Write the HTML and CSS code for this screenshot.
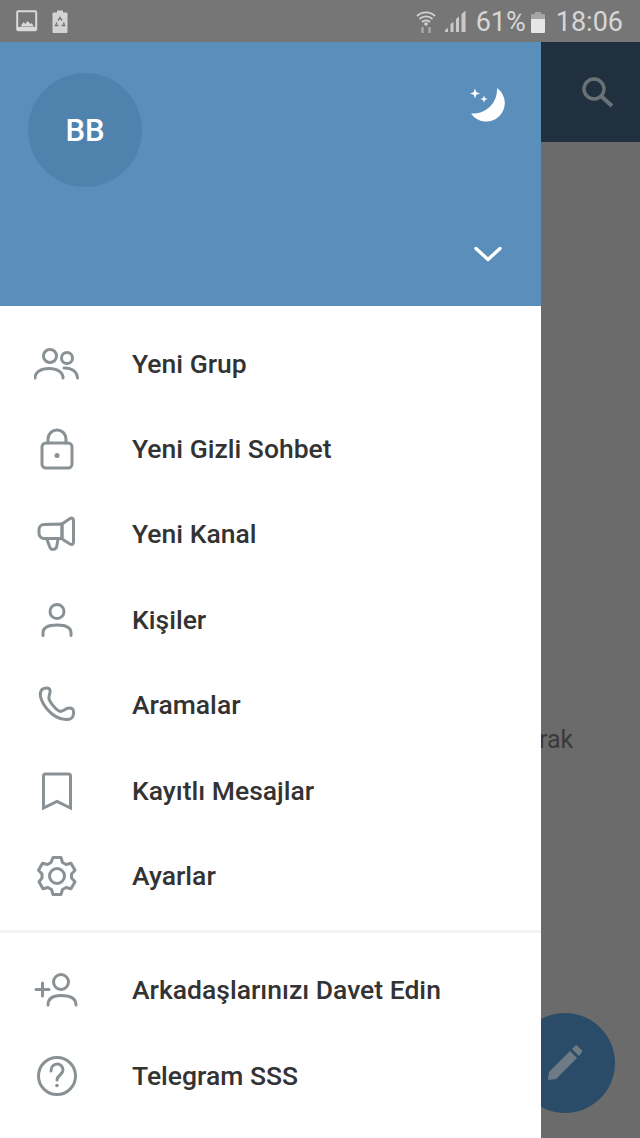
FILE: index.html
```html
<!DOCTYPE html>
<html lang="tr">
  <head>
    <meta charset="UTF-8" />
    <meta name="viewport" content="width=device-width, initial-scale=1.0" />
    <title>Telegram Menu</title>
    <link rel="stylesheet" href="styles.css">
  </head>
  <body>
    <div class="phone">
      <!-- Status bar -->
      <div class="statusbar">
        <div class="status-left">
          <svg class="st-icon" width="22" height="22" viewBox="0 0 22 22">
            <rect x="1.2" y="1.2" width="19" height="19" rx="1" fill="none" stroke="#d9d9d9" stroke-width="2"/>
            <path d="M4.5 16.5 L7.5 12 L9.5 14 L11.5 11 L14.5 14 L15.5 13 L18 16.5Z" fill="#d9d9d9"/>
            <rect x="2" y="17" width="18" height="3" fill="#d9d9d9"/>
          </svg>
          <svg class="st-icon" width="16" height="23" viewBox="0 0 16 23">
            <path d="M5 0.5h6v2h3.5a1 1 0 0 1 1 1V22a1 1 0 0 1-1 1H1.5a1 1 0 0 1-1-1V3.500a1 1 0 0 1 1-1H5Z" fill="#d4d4d4"/>
            <path d="M6 10.500l2-3 2 3M11.500 12.500l1 3h-3M6.500 15.500H3.500l1.500-3" fill="none" stroke="#757575" stroke-width="1.400"/>
          </svg>
        </div>
        <div class="status-right">
          <svg width="20" height="26" viewBox="0 0 20 26">
            <path d="M1 8a13 13 0 0 1 18 0M3.500 11a9.500 9.500 0 0 1 13 0M6 14a6 6 0 0 1 8 0" fill="none" stroke="#d2d2d2" stroke-width="1.800"/>
            <circle cx="10" cy="16" r="1.800" fill="#d2d2d2"/>
            <path d="M6.500 19v6M13.500 19v6" stroke="#a8a8a8" stroke-width="2.500"/>
          </svg>
          <svg class="signal" width="23" height="22" viewBox="0 0 23 22">
            <path d="M1 22v-2l3-2v4zM6.500 22v-8l3-2v10zM12 22V9l3-2.500V22zM17.500 22V4l4-3.500V22z" fill="#c9c9c9"/>
          </svg>
          <span class="st-text pct">61%</span>
          <svg class="battery" width="14" height="21" viewBox="0 0 14 21">
            <path d="M4 0h6v2h3a1 1 0 0 1 1 1v4H0V3a1 1 0 0 1 1-1h3Z" fill="#a5a5a5"/>
            <path d="M0 7h14v13a1 1 0 0 1-1 1H1a1 1 0 0 1-1-1Z" fill="#e6e6e6"/>
          </svg>
          <span class="st-text clock">18:06</span>
        </div>
      </div>

      <!-- Page behind the drawer -->
      <div class="behind">
        <div class="appbar">
          <svg width="34" height="34" viewBox="0 0 34 34">
            <circle cx="14" cy="14" r="10" fill="none" stroke="#6b7276" stroke-width="3.400"/>
            <path d="M21.500 21.500L32 31" stroke="#6b7276" stroke-width="4"/>
          </svg>
        </div>
        <div class="behind-body">
          <p class="behind-text">rak</p>
          <div class="fab">
            <svg width="38" height="38" viewBox="0 0 38 38">
              <path d="M2 36l1-8L24 7l7 7-21 21Z" fill="#6f7b84"/>
              <path d="M26 5l3.500-3.500a1 1 0 0 1 1.400 0l5.100 5.100a1 1 0 0 1 0 1.400L33 12Z" fill="#6f7b84"/>
            </svg>
          </div>
        </div>
      </div>

      <!-- Drawer -->
      <div class="drawer">
        <div class="drawer-head">
          <div class="head-top">
            <div class="avatar">BB</div>
            <svg class="moon" width="38" height="36" viewBox="0 0 38 36">
              <path d="M29 1A24 24 0 0 1 3 26.500A18.500 18.500 0 1 0 29 1Z" fill="#fff"/>
              <path d="M7 1.500l1.300 3.700L12 6.500 8.300 7.800 7 11.500 5.700 7.800 2 6.500 5.700 5.200Z" fill="#fff"/>
              <path d="M16 8.500l1 2.500 2.500 1-2.500 1-1 2.500-1-2.500-2.500-1 2.500-1Z" fill="#fff"/>
            </svg>
          </div>
          <svg class="chevron" width="28" height="16" viewBox="0 0 28 16">
            <path d="M2 2.500L14 13.500L26 2.500" fill="none" stroke="#fff" stroke-width="3.400" stroke-linecap="round" stroke-linejoin="round"/>
          </svg>
        </div>

        <ul class="menu">
          <li class="menu-item">
            <svg class="menu-icon" width="46" height="34" viewBox="0 0 46 34">
              <circle cx="16" cy="9" r="6.500"/>
              <circle cx="33" cy="11" r="5.500"/>
              <path d="M1 31c0-6 6-9.500 14-9.500S29 25 29 31"/>
              <path d="M30 21c7-.5 13 3 13.500 10"/>
            </svg>
            <span>Yeni Grup</span>
          </li>
          <li class="menu-item">
            <svg class="menu-icon" width="46" height="42" viewBox="0 0 46 42">
              <rect x="8" y="15" width="30" height="25" rx="4"/>
              <path d="M14 15v-4a9 9 0 0 1 18 0v4"/>
              <circle class="dot" cx="23" cy="27.500" r="2.500"/>
            </svg>
            <span>Yeni Gizli Sohbet</span>
          </li>
          <li class="menu-item">
            <svg class="menu-icon" width="46" height="38" viewBox="0 0 46 38">
              <path d="M28 9L10 9.500a5 5 0 0 0-5 5v4a5 5 0 0 0 5 5H28Z"/>
              <path d="M28 9L36 3.500c2-1 3.500 0 3.500 2V27c0 2-1.500 3-3.500 2L28 24Z"/>
              <path d="M13 24.500l3 8c1 2.500 5 2.500 6.500 0L24 24.500"/>
            </svg>
            <span>Yeni Kanal</span>
          </li>
          <li class="menu-item">
            <svg class="menu-icon" width="46" height="34" viewBox="0 0 46 34">
              <circle cx="23" cy="8.500" r="7"/>
              <path d="M9 32.500V30c0-5 5-8 14-8s14 3 14 8v2.500"/>
            </svg>
            <span>Kişiler</span>
          </li>
          <li class="menu-item">
            <svg class="menu-icon" width="46" height="38" viewBox="0 0 46 38">
              <path d="M8 3.500c2.500-2 7-2.500 8 .5 1 3-2 6-1 9s6 10 10 12 6-3 10-3c3 0 5 .5 4.500 6-.5 4-2 5.500-7 5.500C18 34 3 14 7 5Z"/>
            </svg>
            <span>Aramalar</span>
          </li>
          <li class="menu-item">
            <svg class="menu-icon" width="46" height="38" viewBox="0 0 46 38">
              <path d="M9.500 36V4a2 2 0 0 1 2-2h23a2 2 0 0 1 2 2v32L23 29.500Z"/>
            </svg>
            <span>Kayıtlı Mesajlar</span>
          </li>
          <li class="menu-item">
            <svg class="menu-icon" width="46" height="42" viewBox="0 0 46 42">
              <circle cx="23" cy="21" r="7.500"/>
              <path d="M19 2.500h8l1.500 5 3.500 2 5-1.200 4 7-3.500 3.700v4l3.500 3.700-4 7-5-1.200-3.500 2-1.500 5h-8l-1.500-5-3.500-2-5 1.200-4-7L8 23v-4l-3.500-3.700 4-7 5 1.200 3.500-2Z" stroke-linejoin="round"/>
            </svg>
            <span>Ayarlar</span>
          </li>
        </ul>

        <div class="divider"></div>

        <ul class="menu">
          <li class="menu-item">
            <svg class="menu-icon" width="46" height="34" viewBox="0 0 46 34">
              <circle cx="27" cy="9" r="7.500"/>
              <path d="M14 32c0-7 5-9.500 13-9.500S42 25 42 32"/>
              <path d="M2 16.500h13M8.500 10v13"/>
            </svg>
            <span>Arkadaşlarınızı Davet Edin</span>
          </li>
          <li class="menu-item">
            <svg class="menu-icon" width="46" height="42" viewBox="0 0 46 42">
              <circle cx="23" cy="21" r="18.500"/>
              <path d="M17 16c0-9 12-9 12-1 0 5-6 5-6 10"/>
              <circle class="dot" cx="23" cy="30.500" r="1.800"/>
            </svg>
            <span>Telegram SSS</span>
          </li>
        </ul>
      </div>
    </div>
  </body>
</html>
```

FILE: styles.css
```css
/* Page layout */
body {
  margin: 0;
  font-family: Roboto, "Liberation Sans", sans-serif;
  background: #6b6b6b;
}

.phone {
  position: relative;
  width: 640px;
  height: 1138px;
  overflow: hidden;
  display: flex;
  flex-direction: column;
}

/* Status bar */
.statusbar {
  height: 42px;
  flex-shrink: 0;
  background: #767676;
  display: flex;
  justify-content: space-between;
  align-items: center;
  padding: 0 17px 0 16px;
}

.status-left,
.status-right {
  display: flex;
  align-items: center;
}

.status-left {
  gap: 14px;
}

.st-text {
  font-size: 27px;
  color: #d6d6d6;
  line-height: 42px;
  padding-top: 2px;
}

.signal {
  margin-left: 8px;
}

.pct {
  margin-left: 9px;
}

.battery {
  margin-left: 5px;
  margin-top: 2px;
}

.clock {
  margin-left: 11px;
}

/* Page behind the drawer */
.behind {
  flex: 1;
  display: flex;
  flex-direction: column;
}

.appbar {
  height: 100px;
  background: #20303f;
  display: flex;
  justify-content: flex-end;
  align-items: center;
  padding: 0 26px 0 0;
}

.behind-body {
  flex: 1;
  background: #6b6b6b;
  position: relative;
}

.behind-text {
  margin: 0;
  position: absolute;
  left: 539px;
  top: 582px;
  font-size: 25px;
  line-height: 32px;
  color: #3a3a3a;
}

.fab {
  position: absolute;
  left: 515px;
  top: 871px;
  width: 100px;
  height: 100px;
  border-radius: 50%;
  background: #2a4c68;
  display: flex;
  align-items: center;
  justify-content: center;
}

/* Drawer */
.drawer {
  position: absolute;
  top: 42px;
  left: 0;
  bottom: 0;
  width: 541px;
  background: #fff;
}

.drawer-head {
  height: 264px;
  box-sizing: border-box;
  background: #5a8fbb;
  padding: 31px 35px 0 28px;
  display: flex;
  flex-direction: column;
}

.head-top {
  display: flex;
  justify-content: space-between;
  align-items: flex-start;
}

.avatar {
  width: 114px;
  height: 114px;
  border-radius: 50%;
  background: #4f83ae;
  color: #fff;
  font-size: 31px;
  font-weight: 500;
  display: flex;
  align-items: center;
  justify-content: center;
}

.moon {
  margin-top: 14px;
}

.chevron {
  align-self: flex-end;
  margin-top: 59px;
  margin-right: 4px;
}

/* Menu rows */
.menu {
  list-style: none;
  margin: 0;
  padding: 15px 0 0;
}

.menu-item {
  height: 85.4px;
  display: flex;
  align-items: center;
  font-size: 26.5px;
  font-weight: 500;
  color: #333;
}

.menu-item span {
  padding-bottom: 1px;
}

.menu-icon {
  width: 46px;
  margin-left: 34px;
  margin-right: 52px;
  fill: none;
  stroke: #8a9194;
  stroke-width: 3;
  stroke-linecap: round;
}

.menu-icon .dot {
  fill: #8a9194;
  stroke: none;
}

.divider {
  height: 3px;
  margin-top: 11px;
  background: #f3f3f3;
}
```
